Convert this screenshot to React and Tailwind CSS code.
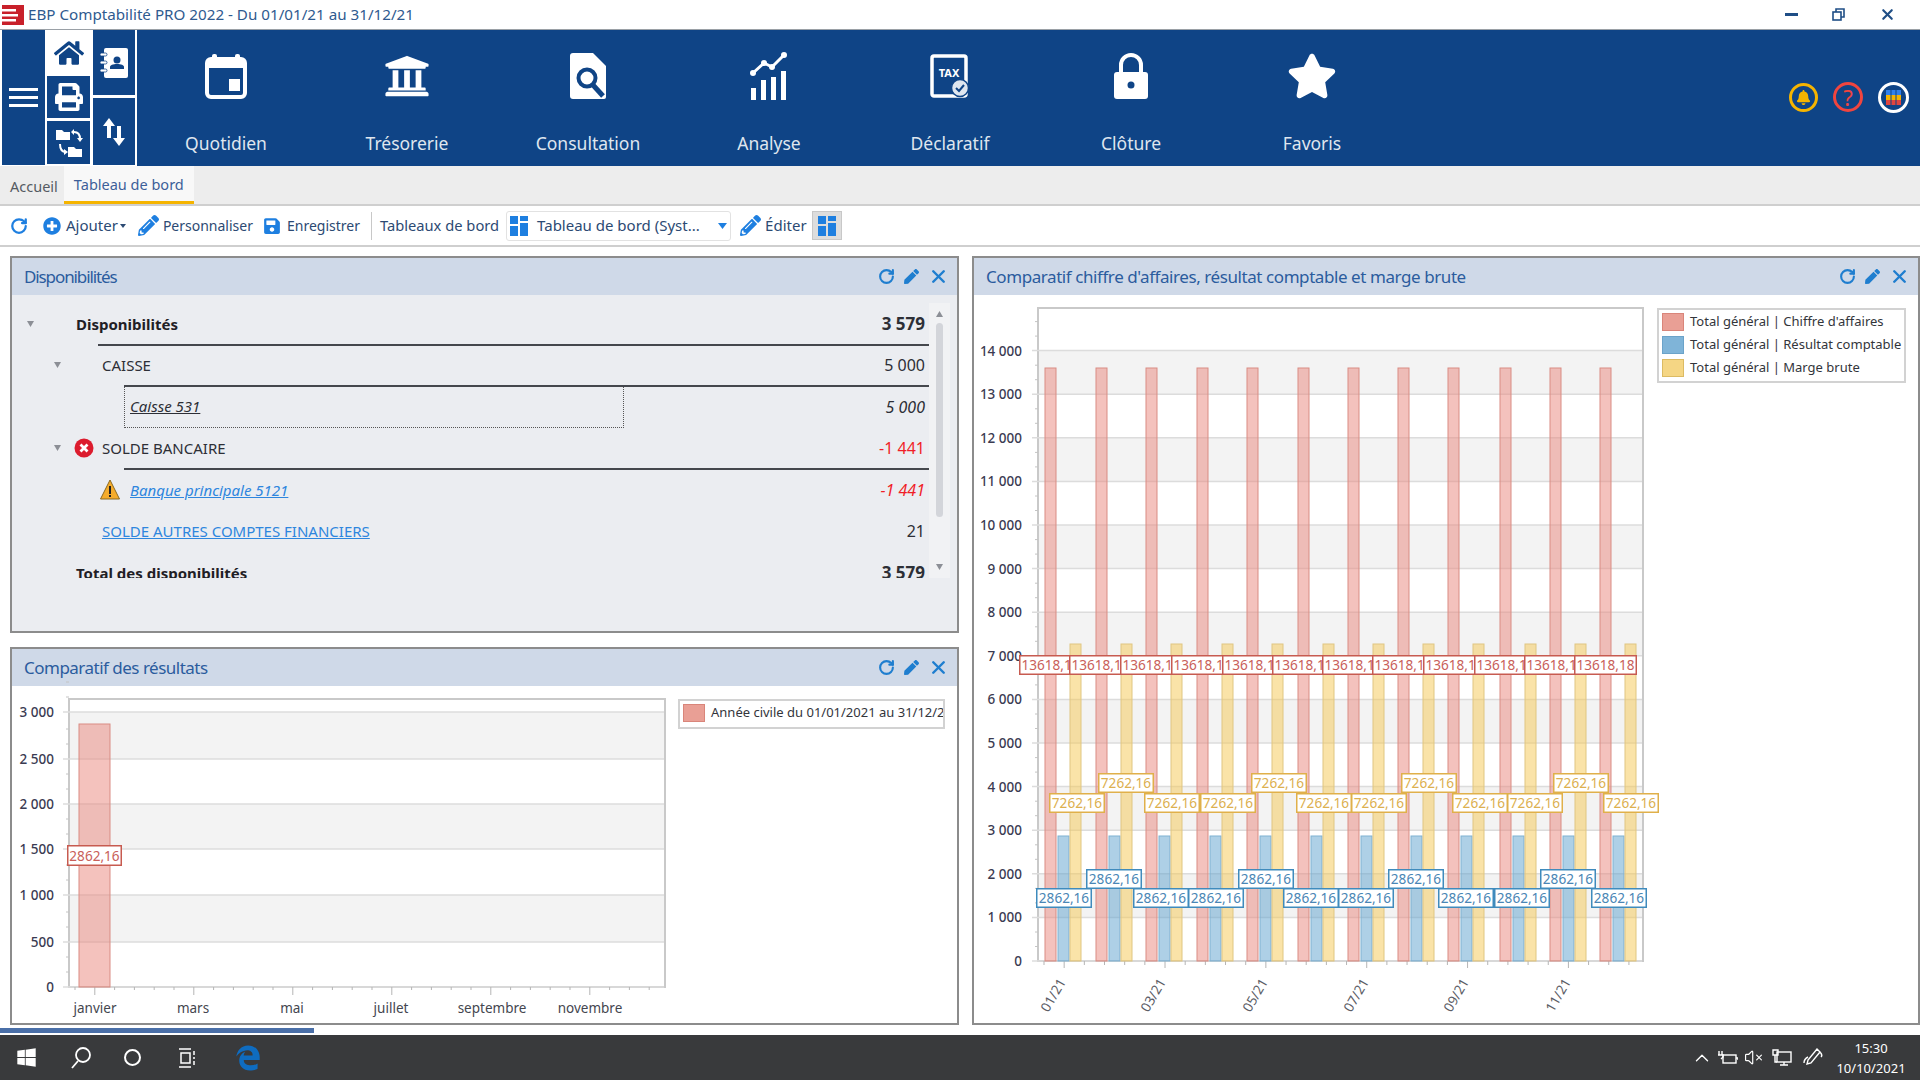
import React from "react";
import { ChevronUp, RotateCw, VolumeX, X } from "lucide-react";
import {
  FaBell,
  FaEdgeLegacy,
  FaHome,
  FaPen,
  FaPencilAlt,
  FaPlusCircle,
  FaPrint,
  FaSave,
  FaStar,
  FaUniversity,
  FaWindows,
} from "react-icons/fa";

const NAVY = "#0f4486";
const GROUPS = [1045, 1096, 1146, 1197, 1247, 1298, 1348, 1398, 1448, 1500, 1550, 1600];
const RED_LABELS = [1019, 1069, 1120, 1171, 1222, 1272, 1322, 1372, 1423, 1474, 1524, 1574];
const YELLOW_LABELS = [
  [1049, 793], [1098, 773], [1144, 793], [1200, 793], [1251, 773], [1296, 793],
  [1351, 793], [1401, 773], [1452, 793], [1507, 793], [1553, 773], [1603, 793],
];
const BLUE_LABELS = [
  [1036, 888], [1086, 869], [1133, 888], [1188, 888], [1238, 869], [1283, 888],
  [1338, 888], [1388, 869], [1438, 888], [1494, 888], [1540, 869], [1591, 888],
];

const range = (n) => Array.from({ length: n }, (_, i) => i);

const Calendar = () => (
  <svg width="42" height="46" viewBox="0 0 42 46" fill="none">
    <rect x="2" y="6" width="38" height="38" rx="4" stroke="white" strokeWidth="4" />
    <rect x="2" y="6" width="38" height="9" fill="white" />
    <rect x="7" y="1" width="5" height="9" rx="2" fill="white" />
    <rect x="30" y="1" width="5" height="9" rx="2" fill="white" />
    <rect x="24" y="26" width="11" height="12" fill="white" />
  </svg>
);

const DocSearch = () => (
  <svg width="38" height="48" viewBox="0 0 38 48">
    <path d="M4 1h20l13 13v31a2 2 0 0 1-2 2H4a3 3 0 0 1-3-3V4a3 3 0 0 1 3-3z" fill="white" />
    <circle cx="18" cy="26" r="8.5" fill="none" stroke={NAVY} strokeWidth="4" />
    <path d="M24 33l10 11" stroke={NAVY} strokeWidth="5" />
  </svg>
);

const Analysis = () => (
  <svg width="38" height="48" viewBox="0 0 38 48" fill="white">
    <path d="M3 21l11-10 8 4L34 3" fill="none" stroke="white" strokeWidth="3" />
    <circle cx="3" cy="21" r="3" />
    <circle cx="14" cy="11" r="3" />
    <circle cx="22" cy="15" r="3" />
    <circle cx="34" cy="3" r="3" />
    <rect x="1" y="36" width="5" height="12" />
    <rect x="11" y="28" width="5" height="20" />
    <rect x="21" y="25" width="5" height="23" />
    <rect x="31" y="19" width="5" height="29" />
  </svg>
);

const Tax = () => (
  <svg width="40" height="46" viewBox="0 0 40 46">
    <rect x="2" y="3" width="34" height="40" rx="2" fill="none" stroke="white" strokeWidth="3.5" />
    <text x="19" y="24" textAnchor="middle" fill="white" fontSize="11" fontWeight="700">TAX</text>
    <circle cx="30" cy="35" r="8.5" fill="#dfe6ef" stroke={NAVY} strokeWidth="1.5" />
    <path d="M26 35l3 3 5-6" fill="none" stroke={NAVY} strokeWidth="2" />
  </svg>
);

const Lock = () => (
  <svg width="36" height="46" viewBox="0 0 36 46">
    <path d="M8 20V12a10 10 0 0 1 20 0v8" fill="none" stroke="white" strokeWidth="4" />
    <rect x="1" y="19" width="34" height="27" rx="3" fill="white" />
    <circle cx="18" cy="32" r="3.5" fill={NAVY} />
  </svg>
);

const Contacts = () => (
  <svg width="28" height="30" viewBox="0 0 28 30" fill="white">
    <rect x="4" y="0" width="24" height="30" rx="2" />
    <rect x="0" y="5" width="7" height="3" rx="1.5" stroke={NAVY} strokeWidth="0.8" />
    <rect x="0" y="13" width="7" height="3" rx="1.5" stroke={NAVY} strokeWidth="0.8" />
    <rect x="0" y="21" width="7" height="3" rx="1.5" stroke={NAVY} strokeWidth="0.8" />
    <circle cx="17" cy="12" r="3.5" fill={NAVY} />
    <path d="M10 21h14v-2c0-2-3-3-7-3s-7 1-7 3z" fill={NAVY} />
  </svg>
);

const FolderSync = () => (
  <svg width="28" height="30" viewBox="0 0 28 30" fill="white">
    <path d="M1 2h6l2 2h6v8H1z" />
    <path d="M13 19h6l2 2h6v8H13z" />
    <path d="M19 4c4 0 6 2 6 7M5 16c0 6 2 8 6 8" fill="none" stroke="white" strokeWidth="2" />
    <path d="M22 10h6l-3 4zM9 21v6l4-3zM19 1v6l-3-3z" />
  </svg>
);

const Arrows = () => (
  <svg width="22" height="28" viewBox="0 0 22 28" fill="white">
    <path d="M6 0l6 8H8v12H4V8H0z" />
    <path d="M16 28l6-8h-4V8h-4v12h-4z" />
  </svg>
);

const Boards = () => (
  <svg width="18" height="20" viewBox="0 0 18 20" fill="#1e7fe0">
    <rect x="0" y="0" width="8" height="8" />
    <rect x="10" y="0" width="8" height="5" />
    <rect x="0" y="10" width="8" height="10" />
    <rect x="10" y="7" width="8" height="13" />
  </svg>
);

const ErrorBadge = () => (
  <svg width="20" height="20" viewBox="0 0 20 20">
    <circle cx="10" cy="10" r="9.5" fill="#dc1c2e" />
    <path d="M6.5 6.5l7 7M13.5 6.5l-7 7" stroke="white" strokeWidth="2.8" />
  </svg>
);

const Warning = () => (
  <svg width="20" height="21" viewBox="0 0 20 21">
    <path d="M10 1l9.5 19H.5z" fill="#f5ac2c" stroke="#8a6a20" strokeWidth="1" />
    <rect x="9" y="7" width="2" height="8" fill="#222" />
    <rect x="9" y="16" width="2" height="2" fill="#222" />
  </svg>
);

const Caret = () => (
  <svg width="7" height="6" viewBox="0 0 7 6" className="block">
    <path d="M0 0h7L3.5 6z" fill="#8c8f96" />
  </svg>
);

const Panel = ({ title, titleClass = "tracking-[-0.03em]", className, children }) => (
  <section className={`flex flex-col border-2 border-[#8c8c8c] ${className}`}>
    <header className="flex h-[37px] shrink-0 items-center bg-[#cfd9e8] pl-[12px] pr-[8px]">
      <h2 className={`text-[17px] font-normal text-[#2b5c9e] ${titleClass}`}>{title}</h2>
      <div className="ml-auto flex items-center gap-[9px] text-[#1f7ecf]">
        <RotateCw size={17} strokeWidth={3} />
        <FaPen size={15} />
        <X size={21} strokeWidth={2.8} />
      </div>
    </header>
    {children}
  </section>
);

const NavItem = ({ icon, label }) => (
  <div className="flex w-[181px] flex-col items-center">
    <div className="flex h-[50px] items-center">{icon}</div>
    <span className="mt-[30px] text-[17.5px] leading-[24px] text-[#dfe6ef]">{label}</span>
  </div>
);

const ToolLabel = ({ children, className = "" }) => (
  <span className={`whitespace-nowrap text-[#2c4a73] ${className}`}>{children}</span>
);

const Row = ({ children, value, valueClass = "text-[16px]" }) => (
  <div className="flex h-[41.5px] items-center pr-[4px] text-[15px] text-[#2d2f36]">
    {children}
    <span className={`ml-auto whitespace-nowrap ${valueClass}`}>{value}</span>
  </div>
);

const Rule = ({ className }) => <div className={`relative -top-[1px] -mb-[2px] h-0 border-t-2 border-[#44474d] ${className}`} />;

const Legend = ({ items, className }) => (
  <div className={`mt-[13px] flex flex-col gap-[5px] overflow-hidden border-2 border-[#d2d2d2] bg-white py-[3px] pl-[3px] ${className}`}>
    {items.map(([label, swatch]) => (
      <div key={label} className="flex h-[18px] items-center gap-[6px]">
        <span className={`h-[18px] w-[22px] shrink-0 border ${swatch}`} />
        <span className="text-[13px] whitespace-nowrap text-[#33353b]">{label}</span>
      </div>
    ))}
  </div>
);

const Tag = ({ x, y, w, h = 20, label, stroke, color, size = 13.6 }) => (
  <g>
    <rect x={x + 0.75} y={y + 0.75} width={w - 1.5} height={h - 1.5} fill="white" stroke={stroke} strokeWidth="1.5" />
    <text x={x + w / 2} y={y + h / 2 + 5} textAnchor="middle" fill={color} fontSize={size}>{label}</text>
  </g>
);

const RevenueChart = () => {
  const scale = (v) => 961 - (v / 1000) * 43.6;
  return (
    <svg width="683" height="726" viewBox="974 295 683 726" className="shrink-0 overflow-visible">
      <rect x="1038" y="308" width="605" height="653" fill="white" stroke="#c9c9c9" strokeWidth="2" />
      {[14, 12, 10, 8, 6, 4, 2].map((k) => (
        <rect key={k} x="1039" y={scale(k * 1000)} width="603" height="43.6" fill="#f3f3f3" />
      ))}
      {range(15).map((k) => (
        <g key={k}>
          <line x1="1032" x2="1642" y1={scale(k * 1000)} y2={scale(k * 1000)} stroke="#dcdcdc" strokeWidth="1.5" />
          <text x="1022" y={scale(k * 1000) + 5} textAnchor="end" fill="#3b3b52" fontSize="13.5" fontWeight="500">
            {k === 0 ? "0" : `${k} 000`}
          </text>
          <line x1="1035" x2="1038" y1={scale(k * 1000) - 14.5} y2={scale(k * 1000) - 14.5} stroke="#c4c4c4" />
          <line x1="1035" x2="1038" y1={scale(k * 1000) - 29} y2={scale(k * 1000) - 29} stroke="#c4c4c4" />
        </g>
      ))}
      {range(30).map((k) => (
        <line key={k} x1={1044 + k * 20.17} x2={1044 + k * 20.17} y1="961" y2={k % 5 === 1 ? 968 : 965} stroke="#b5b5b5" />
      ))}
      {GROUPS.map((x) => (
        <g key={x} strokeWidth="1">
          <rect x={x} y="368" width="11" height="593" fill="#e9867c" fillOpacity="0.5" stroke="#d98c83" />
          <rect x={x + 13} y="836" width="11" height="125" fill="#5da2cd" fillOpacity="0.5" stroke="#7fb1d2" />
          <rect x={x + 25} y="644" width="11" height="317" fill="#f5c851" fillOpacity="0.5" stroke="#e0c681" />
        </g>
      ))}
      {RED_LABELS.map((x) => (
        <Tag key={x} x={x} y={655} w={63} label="13618,18" stroke="#c75b50" color="#c9605a" />
      ))}
      {YELLOW_LABELS.map(([x, y]) => (
        <Tag key={x} x={x} y={y} w={56} label="7262,16" stroke="#e0b04a" color="#dcb04f" />
      ))}
      {BLUE_LABELS.map(([x, y]) => (
        <Tag key={x} x={x} y={y} w={56} label="2862,16" stroke="#3f8bbd" color="#4a86b5" />
      ))}
      {[
        ["01/21", 1053], ["03/21", 1153], ["05/21", 1255],
        ["07/21", 1356], ["09/21", 1456], ["11/21", 1558],
      ].map(([t, x]) => (
        <text key={t} x={x} y="1000" textAnchor="middle" fill="#5b5d66" fontSize="13.5" transform={`rotate(-60 ${x} 995)`}>{t}</text>
      ))}
    </svg>
  );
};

const ResultChart = () => {
  const ys = [987, 942, 895, 849, 804, 759, 712];
  const months = [["janvier", 95], ["mars", 193], ["mai", 292], ["juillet", 391], ["septembre", 492], ["novembre", 590]];
  return (
    <svg width="666" height="337" viewBox="12 686 666 337" className="shrink-0 overflow-visible">
      <rect x="69" y="699" width="596" height="288" fill="white" stroke="#c9c9c9" strokeWidth="2" />
      <rect x="70" y="712" width="594" height="47" fill="#f3f3f3" />
      <rect x="70" y="804" width="594" height="45" fill="#f3f3f3" />
      <rect x="70" y="895" width="594" height="47" fill="#f3f3f3" />
      {ys.map((y, i) => (
        <g key={y}>
          <line x1="63" x2="664" y1={y} y2={y} stroke="#dcdcdc" strokeWidth="1.5" />
          <text x="54" y={y + 5} textAnchor="end" fill="#3b3b52" fontSize="13.5" fontWeight="500">
            {i === 0 ? "0" : i === 1 ? "500" : `${Math.floor(i / 2)} ${i % 2 ? "500" : "000"}`}
          </text>
          <line x1="66" x2="69" y1={y - 15} y2={y - 15} stroke="#c4c4c4" />
          <line x1="66" x2="69" y1={y - 30} y2={y - 30} stroke="#c4c4c4" />
        </g>
      ))}
      {range(30).map((k) => (
        <line key={k} x1={75 + k * 19.8} x2={75 + k * 19.8} y1="987" y2={k % 5 === 1 ? 995 : 990} stroke="#b5b5b5" />
      ))}
      <rect x="79" y="724" width="31" height="263" fill="#e9867c" fillOpacity="0.5" stroke="#d98c83" />
      <Tag x={67} y={845} w={55} h={21} label="2862,16" stroke="#c75b50" color="#c9605a" />
      {months.map(([t, x]) => (
        <text key={t} x={x} y="1013" textAnchor="middle" fill="#44464f" fontSize="13.5">{t}</text>
      ))}
    </svg>
  );
};

const Disponibilites = () => (
  <div className="mt-[8px] flex h-[275px] overflow-hidden">
    <div className="w-[917px] shrink-0">
      <Row value="3 579" valueClass="font-bold text-[17px]">
        <span className="ml-[15px] w-[49px]"><Caret /></span>
        <span className="font-bold text-[#1f2025]">Disponibilités</span>
      </Row>
      <Rule className="ml-[86px]" />
      <Row value="5 000">
        <span className="ml-[42px] w-[48px]"><Caret /></span>
        <span>CAISSE</span>
      </Row>
      <Rule className="ml-[112px]" />
      <Row value="5 000" valueClass="italic text-[16px]">
        <div className="ml-[112px] flex h-full w-[500px] items-center border border-t-0 border-dotted border-[#555] pl-[5px]">
          <span className="italic underline">Caisse 531</span>
        </div>
      </Row>
      <Row value="-1 441" valueClass="text-[16px] text-[#f01e28]">
        <span className="ml-[42px] w-[20px]"><Caret /></span>
        <ErrorBadge />
        <span className="ml-[8px]">SOLDE BANCAIRE</span>
      </Row>
      <Rule className="ml-[112px]" />
      <Row value="-1 441" valueClass="italic text-[16px] text-[#f01e28]">
        <span className="ml-[88px]"><Warning /></span>
        <span className="ml-[10px] text-[#2e86de] italic underline">Banque principale 5121</span>
      </Row>
      <Row value="21">
        <span className="ml-[90px] text-[#2e86de] underline">SOLDE AUTRES COMPTES FINANCIERS</span>
      </Row>
      <Row value="3 579" valueClass="font-bold text-[17px]">
        <span className="ml-[64px] font-bold text-[#1f2025]">Total des disponibilités</span>
      </Row>
    </div>
    <div className="flex h-[275px] w-[21px] shrink-0 flex-col items-center bg-[#f1f2f4] py-[8px]">
      <svg width="7" height="6" viewBox="0 0 7 6"><path d="M3.5 0L7 6H0z" fill="#8c8f96" /></svg>
      <div className="mt-[6px] h-[194px] w-[7px] rounded-full bg-[#d3d5da]" />
      <svg width="7" height="6" viewBox="0 0 7 6" className="mt-auto"><path d="M0 0h7L3.5 6z" fill="#8c8f96" /></svg>
    </div>
  </div>
);

export default function App() {
  return (
    <div className="flex h-[1080px] w-[1920px] flex-col overflow-hidden bg-white font-['Noto_Sans',sans-serif]">
      {/* title bar */}
      <div className="flex h-[30px] shrink-0 items-center border-b border-[#9aa0a6] pl-[2px] pr-[24px]">
        <svg width="22" height="20" viewBox="0 0 22 20">
          <rect width="22" height="20" fill="#c8202a" />
          <rect x="0" y="4" width="14" height="2.5" fill="white" />
          <rect x="0" y="9" width="16" height="2.5" fill="white" />
          <rect x="0" y="14" width="14" height="2.5" fill="white" />
        </svg>
        <span className="ml-[4px] text-[15.2px] text-[#2f5a8f]">EBP Comptabilité PRO 2022 - Du 01/01/21 au 31/12/21</span>
        <div className="ml-auto flex items-center gap-[34px] text-[#1f4e86]">
          <div className="h-[3px] w-[13px] bg-[#1f4e86]" />
          <svg width="13" height="13" viewBox="0 0 13 13" fill="none" stroke="#1f4e86" strokeWidth="1.6">
            <rect x="1" y="4" width="8" height="8" />
            <path d="M4 4V1h8v8H9" />
          </svg>
          <X size={17} strokeWidth={3} />
        </div>
      </div>

      {/* main nav */}
      <div className="flex h-[136px] shrink-0 bg-[#0f4486] text-white">
        <div className="flex h-full w-[137px] shrink-0 bg-white pb-[1px] pl-[2px]">
          <div className="flex w-[43px] flex-col items-center justify-center gap-[5px] bg-[#0f4486]">
            <div className="h-[3px] w-[29px] bg-white" />
            <div className="h-[3px] w-[29px] bg-white" />
            <div className="h-[3px] w-[29px] bg-white" />
          </div>
          <div className="flex w-[47px] flex-col items-center">
            <div className="flex h-[46px] w-full items-center justify-center text-[#0f4486]"><FaHome size={30} /></div>
            <div className="flex h-[42px] w-[43px] items-center justify-center bg-[#0f4486]"><FaPrint size={28} /></div>
            <div className="mt-[3px] flex h-[43px] w-[43px] items-center justify-center bg-[#0f4486]"><FolderSync /></div>
          </div>
          <div className="ml-[1px] flex w-[42px] flex-col gap-[3px]">
            <div className="flex h-[65px] items-center justify-center bg-[#0f4486]"><Contacts /></div>
            <div className="flex flex-1 items-center justify-center bg-[#0f4486]"><Arrows /></div>
          </div>
        </div>
        <div className="-ml-[1.5px] flex pt-[21px]">
          <NavItem icon={<Calendar />} label="Quotidien" />
          <NavItem icon={<FaUniversity size={46} />} label="Trésorerie" />
          <NavItem icon={<DocSearch />} label="Consultation" />
          <NavItem icon={<Analysis />} label="Analyse" />
          <NavItem icon={<Tax />} label="Déclaratif" />
          <NavItem icon={<Lock />} label="Clôture" />
          <NavItem icon={<FaStar size={50} />} label="Favoris" />
        </div>
        <div className="ml-auto flex items-center gap-[15px] pb-[2px] pr-[11px]">
          <div className="flex h-[29px] w-[29px] items-center justify-center rounded-full border-[3px] border-[#f5b400] text-[#f5b400]"><FaBell size={15} /></div>
          <div className="flex h-[30px] w-[30px] items-center justify-center rounded-full border-[3px] border-[#f0453f] text-[22px] leading-none text-[#f0453f]">?</div>
          <div className="flex h-[31px] w-[31px] items-center justify-center rounded-full border-[3px] border-white">
            <svg width="15" height="15" viewBox="0 0 15 15">
              <rect width="15" height="5" fill="#2f80ed" />
              <rect y="5" width="15" height="5" fill="#f5b400" />
              <rect y="10" width="15" height="5" fill="#e0453f" />
              <path d="M5 0v15M10 0v15" stroke={NAVY} strokeWidth="1" />
            </svg>
          </div>
        </div>
      </div>

      {/* tabs */}
      <div className="flex h-[40px] shrink-0 items-end border-b-2 border-[#cfcfcf] bg-[#ededed] pl-[10px]">
        <span className="mb-[6px] text-[14.5px] text-[#555a62]">Accueil</span>
        <div className="ml-[6px] flex h-[38px] w-[130px] items-center justify-center border-b-[3px] border-[#f5b400] bg-[#f8f8f8] pt-[2px] text-[14.5px] text-[#3d5f99]">Tableau de bord</div>
      </div>

      {/* toolbar */}
      <div className="flex h-[41px] shrink-0 items-center border-b-2 border-[#cfcfcf] pl-[10px] text-[#1e7fe0]">
        <RotateCw size={18} strokeWidth={3} />
        <FaPlusCircle size={18} className="ml-[15px]" />
        <ToolLabel className="ml-[5px] text-[15px]">Ajouter</ToolLabel>
        <svg width="6" height="4" viewBox="0 0 6 4" className="ml-[2px]"><path d="M0 0h6L3 4z" fill="#2c4a73" /></svg>
        <FaPencilAlt size={21} className="ml-[12px]" />
        <ToolLabel className="ml-[4px] text-[14px]">Personnaliser</ToolLabel>
        <FaSave size={18} className="ml-[10px]" />
        <ToolLabel className="ml-[6px] text-[14px]">Enregistrer</ToolLabel>
        <div className="ml-[11px] h-[28px] w-[1px] bg-[#c8c8c8]" />
        <ToolLabel className="ml-[8px] text-[14.7px]">Tableaux de bord</ToolLabel>
        <div className="ml-[7px] flex h-[30px] w-[225px] items-center rounded-[3px] border border-[#e2e2e2] pl-[3px]">
          <Boards />
          <ToolLabel className="ml-[9px] text-[15px]">Tableau de bord (Syst...</ToolLabel>
          <svg width="9" height="6" viewBox="0 0 9 6" className="ml-auto mr-[3px]"><path d="M0 0h9L4.5 6z" fill="#1e7fe0" /></svg>
        </div>
        <FaPencilAlt size={21} className="ml-[9px]" />
        <ToolLabel className="ml-[4px] text-[15px]">Éditer</ToolLabel>
        <div className="ml-[5px] flex h-[29px] w-[30px] items-center justify-center border border-[#c8c8c8] bg-[#dddddd]"><Boards /></div>
      </div>

      {/* panels */}
      <main className="flex min-h-0 flex-1 pl-[10px] pt-[9px]">
        <div className="flex w-[949px] shrink-0 flex-col gap-[14px]">
          <Panel title="Disponibilités" titleClass="tracking-[-0.065em]" className="h-[377px] bg-[#ebedf1]">
            <Disponibilites />
          </Panel>
          <Panel title="Comparatif des résultats" className="h-[378px] bg-white">
            <div className="flex">
              <ResultChart />
              <Legend className="h-[30px] w-[267px]" items={[["Année civile du 01/01/2021 au 31/12/2021", "border-[#d9857a] bg-[#e99f95]"]]} />
            </div>
          </Panel>
        </div>
        <Panel
          title="Comparatif chiffre d'affaires, résultat comptable et marge brute"
          titleClass="tracking-[-0.025em]"
          className="ml-[13px] h-[769px] flex-1 bg-white"
        >
          <div className="flex">
            <RevenueChart />
            <Legend
              className="h-[75px] w-[249px]"
              items={[
                ["Total général | Chiffre d'affaires", "border-[#d9857a] bg-[#e99f95]"],
                ["Total général | Résultat comptable", "border-[#6ba3c9] bg-[#7fb4d8]"],
                ["Total général | Marge brute", "border-[#dcbb63] bg-[#f5d684]"],
              ]}
            />
          </div>
        </Panel>
      </main>

      {/* bottom scroll */}
      <div className="flex h-[10px] shrink-0 items-center"><div className="h-[5px] w-[314px] bg-[#4a6fa8]" /></div>

      {/* taskbar */}
      <footer className="flex h-[45px] shrink-0 items-center bg-[#393a3c] text-white">
        <FaWindows size={21} className="ml-[16px]" />
        <svg width="22" height="24" viewBox="0 0 22 24" fill="none" stroke="white" strokeWidth="1.8" className="ml-[33px]">
          <circle cx="13" cy="9" r="7" />
          <path d="M8 15L2 22" />
        </svg>
        <div className="ml-[32px] h-[17px] w-[17px] rounded-full border-2 border-white" />
        <svg width="20" height="20" viewBox="0 0 20 20" fill="none" stroke="white" strokeWidth="1.5" className="ml-[36px]">
          <rect x="4" y="5" width="9" height="10" />
          <path d="M2 1h12M2 19h12M17 3v4M17 9v2M17 13v4" />
        </svg>
        <FaEdgeLegacy size={26} className="ml-[38px] text-[#0f6cc0]" />
        <div className="ml-auto flex items-center pr-[16px]">
          <ChevronUp size={22} strokeWidth={1.5} />
          <svg width="20" height="16" viewBox="0 0 20 16" fill="none" stroke="white" strokeWidth="1.4" className="ml-[5px]">
            <rect x="5" y="5" width="13" height="8" />
            <path d="M18 8h2v2M4 1v4M1 1v4M0 5h5v2l-2 2" />
          </svg>
          <VolumeX size={19} strokeWidth={1.5} className="ml-[6px]" />
          <svg width="20" height="18" viewBox="0 0 20 18" fill="none" stroke="white" strokeWidth="1.4" className="ml-[9px]">
            <rect x="5" y="3" width="14" height="10" />
            <path d="M12 13v3M8 16h8M1 1h5v5H1zM3 6v7h2" />
          </svg>
          <svg width="20" height="20" viewBox="0 0 20 20" fill="none" stroke="white" strokeWidth="1.4" className="ml-[11px]">
            <path d="M14 1l3 3-9 11-4 1 1-4zM1 15c0-3 2-5 4-6M17 4c2 2 2 4 1 5" />
          </svg>
          <div className="ml-[15px] flex w-[66px] flex-col items-center text-[13px] leading-[20px]">
            <span>15:30</span>
            <span>10/10/2021</span>
          </div>
        </div>
      </footer>
    </div>
  );
}
